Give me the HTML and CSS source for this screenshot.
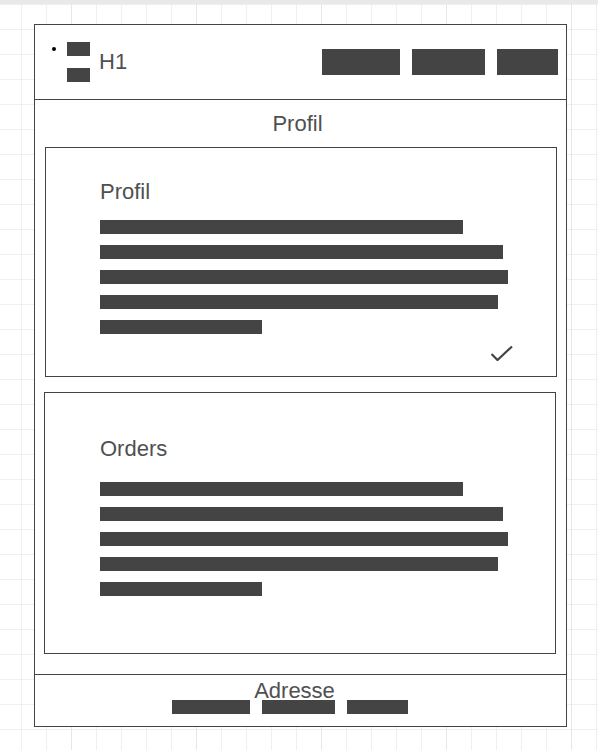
FILE: index.html
```html
<html lang="de">
<head>
    <title>Profil</title>
    <link rel="stylesheet" href="styles.css">
</head>
<body>
    <div class="page">
        <div class="frame">
            <header class="topbar">
                <ul class="menu">
                    <li class="menu-item"><span class="dot"></span><span class="stub"></span></li>
                    <li class="menu-item"><span class="dot dot-off"></span><span class="stub"></span></li>
                </ul>
                <h1 class="brand">H1</h1>
                <div class="actions">
                    <span class="block b-wide"></span>
                    <span class="block b-mid"></span>
                    <span class="block b-small"></span>
                </div>
            </header>

            <h2 class="section-title">Profil</h2>

            <div class="card card-profil">
                <h3 class="card-title">Profil</h3>
                <div class="lines">
                    <span class="line w1"></span>
                    <span class="line w2"></span>
                    <span class="line w3"></span>
                    <span class="line w4"></span>
                    <span class="line w5"></span>
                </div>
                <div class="card-check">
                    <svg width="22" height="16" viewBox="0 0 22 16">
                        <polyline points="0.5,9 6.5,15 21,1.5" fill="none" stroke="#444" stroke-width="2.2"/>
                    </svg>
                </div>
            </div>

            <div class="card card-orders">
                <h3 class="card-title">Orders</h3>
                <div class="lines">
                    <span class="line w1"></span>
                    <span class="line w2"></span>
                    <span class="line w3"></span>
                    <span class="line w4"></span>
                    <span class="line w5"></span>
                </div>
            </div>

            <footer class="foot">
                <div class="foot-title">Adresse</div>
                <div class="foot-blocks">
                    <span class="block-sm b-wide"></span>
                    <span class="block-sm b-mid"></span>
                    <span class="block-sm b-small"></span>
                </div>
            </footer>
        </div>
    </div>
</body>
</html>
```

FILE: styles.css
```css
* {
    box-sizing: border-box;
}
body {
    margin: 0;
    font-family: "Liberation Sans", Arial, sans-serif;
    color: #505050;
    background-color: #fff;
    background-image:
        linear-gradient(#e9e9e9, #e9e9e9),
        linear-gradient(to right, #e6e6e6 1px, transparent 1px),
        linear-gradient(to right, #efefef 1px, transparent 1px),
        linear-gradient(to bottom, #efefef 1px, transparent 1px);
    background-size: 100% 4px, 125px 125px, 25px 25px, 25px 25px;
    background-position: 0 0, 71px 0, 21px 0, 0 4px;
    background-repeat: no-repeat, repeat, repeat, repeat;
    min-height: 750px;
}
.page {
    padding: 24px 0 0 34px;
}
.frame {
    width: 533px;
    border: 1px solid #444;
    background: #fff;
    display: flex;
    flex-direction: column;
}

/* top bar */
.topbar {
    height: 75px;
    border-bottom: 1px solid #444;
    display: flex;
    align-items: center;
    padding: 0 8px 0 17px;
}
.menu {
    list-style: none;
    margin: 0;
    padding: 0;
    display: flex;
    flex-direction: column;
    gap: 12px;
}
.menu-item {
    display: flex;
    align-items: center;
    gap: 11px;
}
.dot {
    width: 4px;
    height: 4px;
    border-radius: 50%;
    background: #000;
}
.dot-off {
    visibility: hidden;
}
.stub {
    width: 23px;
    height: 14px;
    background: #444;
}
.brand {
    margin: 0 0 0 9px;
    font-size: 22px;
    line-height: 26px;
    font-weight: normal;
}
.actions {
    margin-left: auto;
    display: flex;
    gap: 12px;
}
.block {
    height: 26px;
    background: #444;
}
.b-wide { width: 78px; }
.b-mid { width: 73px; }
.b-small { width: 61px; }

/* section */
.section-title {
    margin: 0 0 10px;
    padding: 11px 6px 0 0;
    font-size: 22px;
    line-height: 26px;
    font-weight: normal;
    text-align: center;
}
.card {
    width: 512px;
    border: 1px solid #444;
}
.card-profil {
    margin-left: 10px;
    padding: 31px 43px 15px 54px;
}
.card-orders {
    margin: 15px 0 0 9px;
    padding: 43px 43px 57px 55px;
}
.card-title {
    margin: 0;
    font-size: 22px;
    line-height: 26px;
    font-weight: normal;
}
.card-profil .lines {
    margin-top: 15px;
}
.card-orders .lines {
    margin-top: 20px;
}
.lines {
    display: flex;
    flex-direction: column;
    gap: 11px;
}
.line {
    display: block;
    height: 14px;
    background: #444;
}
.w1 { width: 363px; }
.w2 { width: 403px; }
.w3 { width: 408px; }
.w4 { width: 398px; }
.w5 { width: 162px; }
.card-check {
    margin-top: 11px;
    display: flex;
    justify-content: flex-end;
    height: 16px;
}

/* footer */
.foot {
    margin-top: 20px;
    border-top: 1px solid #444;
    height: 52px;
    padding-top: 6px;
}
.foot-title {
    font-size: 22px;
    line-height: 19px;
    text-align: center;
    padding-right: 12px;
}
.foot-blocks {
    display: flex;
    justify-content: center;
    gap: 12px;
    padding-right: 21px;
}
.block-sm {
    height: 14px;
    background: #444;
}
```
